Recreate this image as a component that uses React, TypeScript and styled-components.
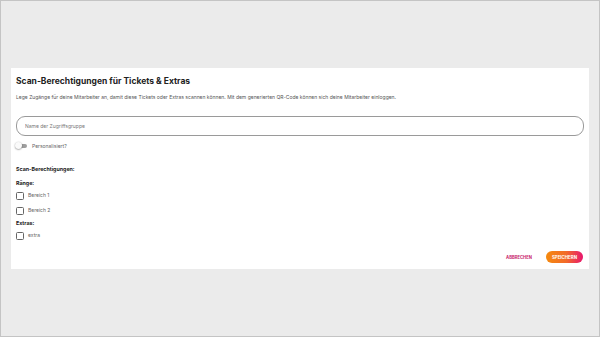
import React from "react";
import styled, { createGlobalStyle } from "styled-components";

const GlobalStyle = createGlobalStyle`
  html, body {
    margin: 0;
    padding: 0;
    background: #ebebeb;
  }
  * {
    box-sizing: border-box;
  }
`;

const App = () => {
  return (
    <>
      <GlobalStyle />
      <Frame>
        <Card>
          <Title>Scan-Berechtigungen für Tickets &amp; Extras</Title>
          <Description>
            Lege Zugänge für deine Mitarbeiter an, damit diese Tickets oder Extras scannen können. Mit dem
            generierten QR-Code können sich deine Mitarbeiter einloggen.
          </Description>
          <InputField placeholder="Name der Zugriffsgruppe" />
          <ToggleRow>
            <Toggle>
              <Knob />
            </Toggle>
            <SmallLabel>Personalisiert?</SmallLabel>
          </ToggleRow>
          <SectionTitle>Scan-Berechtigungen:</SectionTitle>
          <GroupTitle>Ränge:</GroupTitle>
          <CheckList>
            <CheckRow>
              <Box />
              <SmallLabel>Bereich 1</SmallLabel>
            </CheckRow>
            <CheckRow>
              <Box />
              <SmallLabel>Bereich 2</SmallLabel>
            </CheckRow>
          </CheckList>
          <GroupTitle $after="list">Extras:</GroupTitle>
          <CheckList>
            <CheckRow>
              <Box />
              <SmallLabel>extra</SmallLabel>
            </CheckRow>
          </CheckList>
          <Actions>
            <TextButton>ABBRECHEN</TextButton>
            <SaveButton>SPEICHERN</SaveButton>
          </Actions>
        </Card>
      </Frame>
    </>
  );
};
export default App;

const Frame = styled.div`
  width: 600px;
  height: 337px;
  border: 1px solid #c4c4c4;
  background: #ebebeb;
  padding: 67px 10px 0 10px;
  font-family: "Inter", "Roboto", sans-serif;
`;
const Card = styled.section`
  display: flex;
  flex-direction: column;
  background: #ffffff;
  height: 201px;
  padding: 8px 5px 0 5px;
`;
const Title = styled.h1`
  margin: 0;
  font-size: 8.5px;
  font-weight: 700;
  color: #222;
  line-height: 11px;
`;
const Description = styled.p`
  margin: 7px 0 0;
  font-size: 5px;
  line-height: 7px;
  color: #555;
`;
const InputField = styled.input`
  margin-top: 15px;
  height: 20px;
  width: 100%;
  border: 1px solid #9a9a9a;
  border-radius: 9px;
  padding: 0 8px;
  font-family: "Inter", "Roboto", sans-serif;
  font-size: 5px;
  outline: none;
  &::placeholder {
    color: #777;
  }
`;
const ToggleRow = styled.div`
  display: flex;
  align-items: center;
  gap: 5px;
  margin-top: 6px;
  height: 8px;
`;
const Toggle = styled.span`
  position: relative;
  display: inline-block;
  width: 11px;
  height: 4px;
  border-radius: 2px;
  background: #9e9e9e;
`;
const Knob = styled.span`
  position: absolute;
  left: -1px;
  top: -2px;
  width: 7px;
  height: 7px;
  border-radius: 50%;
  background: #fafafa;
  box-shadow: 0 0.5px 1.5px rgba(0, 0, 0, 0.5);
`;
const SmallLabel = styled.span`
  font-size: 5px;
  color: #666;
  line-height: 7px;
`;
const SectionTitle = styled.h2`
  margin: 16px 0 0;
  font-size: 5.3px;
  font-weight: 700;
  color: #222;
  line-height: 7px;
`;
const GroupTitle = styled.h3<{ $after?: "list" }>`
  margin: ${(p) => (p.$after === "list" ? "5px" : "7px")} 0 0;
  font-size: 5.3px;
  font-weight: 700;
  color: #222;
  line-height: 7px;
`;
const CheckList = styled.div`
  display: flex;
  flex-direction: column;
  gap: 6px;
  margin-top: 4px;
`;
const CheckRow = styled.label`
  display: flex;
  align-items: center;
  gap: 4px;
  height: 9px;
`;
const Box = styled.span`
  width: 8px;
  height: 8px;
  border: 1px solid #666;
  border-radius: 1.5px;
`;
const Actions = styled.div`
  display: flex;
  justify-content: flex-end;
  align-items: center;
  gap: 14px;
  margin-top: 11px;
  padding-right: 1px;
`;
const TextButton = styled.button`
  border: none;
  background: none;
  padding: 0;
  font-family: inherit;
  font-size: 4.2px;
  font-weight: 700;
  color: #c8266d;
`;
const SaveButton = styled.button`
  border: none;
  height: 12px;
  padding: 0 6px;
  border-radius: 6px;
  background: linear-gradient(90deg, #f58a0e 0%, #f26a2a 55%, #e8166e 100%);
  color: #fff;
  font-family: inherit;
  font-size: 4.4px;
  font-weight: 700;
`;
